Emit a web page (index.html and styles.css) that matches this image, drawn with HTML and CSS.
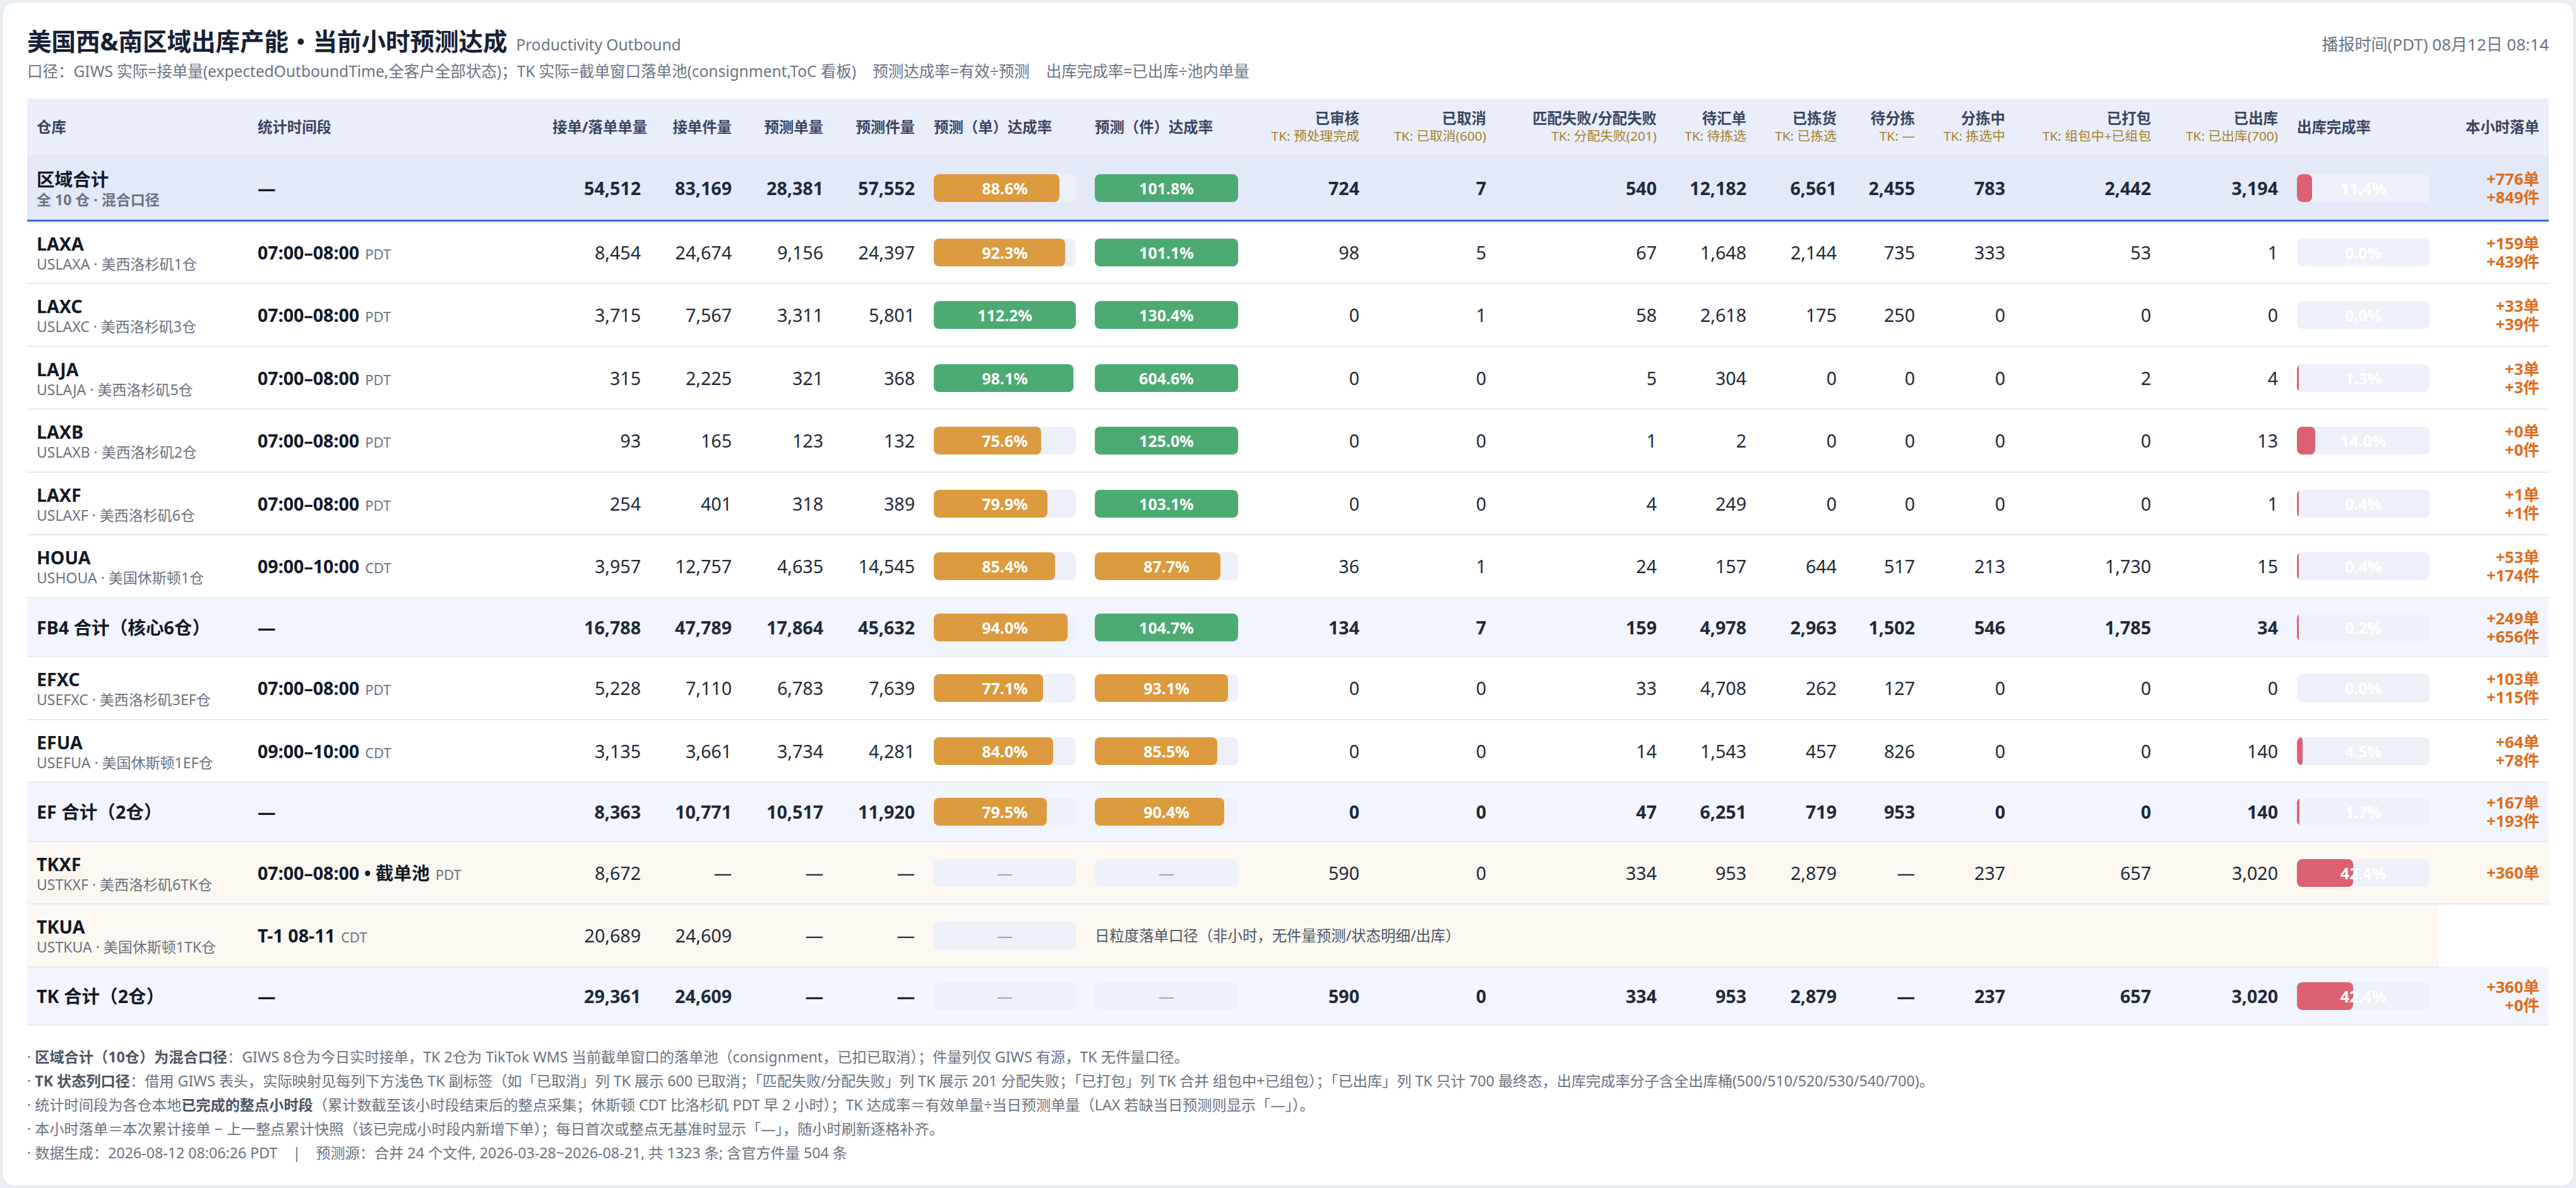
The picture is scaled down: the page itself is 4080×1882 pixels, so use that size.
FILE: index.html
```html
<!DOCTYPE html>
<html lang="zh-CN">
<head>
<meta charset="utf-8">
<title>美国西&amp;南区域出库产能</title>
<link rel="stylesheet" href="styles.css">
</head>
<body>
<div class="card">
  <div class="titlebar">
    <h1>美国西&amp;南区域出库产能・当前小时预测达成<span class="en">Productivity Outbound</span></h1>
    <div class="stamp">播报时间(PDT) 08月12日 08:14</div>
  </div>
  <div class="caliber"><span class="seg">口径：GIWS 实际=接单量(expectedOutboundTime,全客户全部状态)；TK 实际=截单窗口落单池(consignment,ToC 看板)</span><span class="seg">预测达成率=有效÷预测</span><span class="seg">出库完成率=已出库÷池内单量</span></div>

  <table class="grid">
    <colgroup>
      <col class="c1"><col class="c2"><col class="c3"><col class="c4"><col class="c5"><col class="c6"><col class="c7"><col class="c8"><col class="c9"><col class="c10"><col class="c11"><col class="c12"><col class="c13"><col class="c14"><col class="c15"><col class="c16"><col class="c17"><col class="c18"><col class="c19">
    </colgroup>
    <thead>
      <tr>
        <th class="l">仓库</th>
        <th class="l">统计时间段</th>
        <th class="r">接单/落单单量</th>
        <th class="r">接单件量</th>
        <th class="r">预测单量</th>
        <th class="r">预测件量</th>
        <th class="l">预测（单）达成率</th>
        <th class="l">预测（件）达成率</th>
        <th class="r">已审核<span class="sub">TK: 预处理完成</span></th>
        <th class="r">已取消<span class="sub">TK: 已取消(600)</span></th>
        <th class="r">匹配失败/分配失败<span class="sub">TK: 分配失败(201)</span></th>
        <th class="r">待汇单<span class="sub">TK: 待拣选</span></th>
        <th class="r">已拣货<span class="sub">TK: 已拣选</span></th>
        <th class="r">待分拣<span class="sub">TK: —</span></th>
        <th class="r">分拣中<span class="sub">TK: 拣选中</span></th>
        <th class="r">已打包<span class="sub">TK: 组包中+已组包</span></th>
        <th class="r">已出库<span class="sub">TK: 已出库(700)</span></th>
        <th class="l">出库完成率</th>
        <th class="r">本小时落单</th>
      </tr>
    </thead>
    <tbody>
      <tr class="region">
        <td><span class="name">区域合计</span><span class="code">全 10 仓 · 混合口径</span></td>
        <td class="time">—</td>
        <td class="r">54,512</td><td class="r">83,169</td><td class="r">28,381</td><td class="r">57,552</td>
        <td><div class="bar"><div class="fill orange" style="width:88.6%"></div><span class="lbl">88.6%</span></div></td>
        <td><div class="bar"><div class="fill green" style="width:100%"></div><span class="lbl">101.8%</span></div></td>
        <td class="r">724</td><td class="r">7</td><td class="r">540</td><td class="r">12,182</td><td class="r">6,561</td><td class="r">2,455</td><td class="r">783</td><td class="r">2,442</td><td class="r">3,194</td>
        <td><div class="bar"><div class="fill red nz" style="width:11.4%"></div><span class="lbl">11.4%</span></div></td>
        <td class="delta"><span>+776单</span><span>+849件</span></td>
      </tr>
      <tr>
        <td><span class="name">LAXA</span><span class="code">USLAXA · 美西洛杉矶1仓</span></td>
        <td class="time"><b>07:00–08:00</b><span class="tz">PDT</span></td>
        <td class="r">8,454</td><td class="r">24,674</td><td class="r">9,156</td><td class="r">24,397</td>
        <td><div class="bar"><div class="fill orange" style="width:92.3%"></div><span class="lbl">92.3%</span></div></td>
        <td><div class="bar"><div class="fill green" style="width:100%"></div><span class="lbl">101.1%</span></div></td>
        <td class="r">98</td><td class="r">5</td><td class="r">67</td><td class="r">1,648</td><td class="r">2,144</td><td class="r">735</td><td class="r">333</td><td class="r">53</td><td class="r">1</td>
        <td><div class="bar"><span class="lbl">0.0%</span></div></td>
        <td class="delta"><span>+159单</span><span>+439件</span></td>
      </tr>
      <tr>
        <td><span class="name">LAXC</span><span class="code">USLAXC · 美西洛杉矶3仓</span></td>
        <td class="time"><b>07:00–08:00</b><span class="tz">PDT</span></td>
        <td class="r">3,715</td><td class="r">7,567</td><td class="r">3,311</td><td class="r">5,801</td>
        <td><div class="bar"><div class="fill green" style="width:100%"></div><span class="lbl">112.2%</span></div></td>
        <td><div class="bar"><div class="fill green" style="width:100%"></div><span class="lbl">130.4%</span></div></td>
        <td class="r">0</td><td class="r">1</td><td class="r">58</td><td class="r">2,618</td><td class="r">175</td><td class="r">250</td><td class="r">0</td><td class="r">0</td><td class="r">0</td>
        <td><div class="bar"><span class="lbl">0.0%</span></div></td>
        <td class="delta"><span>+33单</span><span>+39件</span></td>
      </tr>
      <tr>
        <td><span class="name">LAJA</span><span class="code">USLAJA · 美西洛杉矶5仓</span></td>
        <td class="time"><b>07:00–08:00</b><span class="tz">PDT</span></td>
        <td class="r">315</td><td class="r">2,225</td><td class="r">321</td><td class="r">368</td>
        <td><div class="bar"><div class="fill green" style="width:98.1%"></div><span class="lbl">98.1%</span></div></td>
        <td><div class="bar"><div class="fill green" style="width:100%"></div><span class="lbl">604.6%</span></div></td>
        <td class="r">0</td><td class="r">0</td><td class="r">5</td><td class="r">304</td><td class="r">0</td><td class="r">0</td><td class="r">0</td><td class="r">2</td><td class="r">4</td>
        <td><div class="bar"><div class="fill red nz" style="width:1.3%"></div><span class="lbl">1.3%</span></div></td>
        <td class="delta"><span>+3单</span><span>+3件</span></td>
      </tr>
      <tr>
        <td><span class="name">LAXB</span><span class="code">USLAXB · 美西洛杉矶2仓</span></td>
        <td class="time"><b>07:00–08:00</b><span class="tz">PDT</span></td>
        <td class="r">93</td><td class="r">165</td><td class="r">123</td><td class="r">132</td>
        <td><div class="bar"><div class="fill orange" style="width:75.6%"></div><span class="lbl">75.6%</span></div></td>
        <td><div class="bar"><div class="fill green" style="width:100%"></div><span class="lbl">125.0%</span></div></td>
        <td class="r">0</td><td class="r">0</td><td class="r">1</td><td class="r">2</td><td class="r">0</td><td class="r">0</td><td class="r">0</td><td class="r">0</td><td class="r">13</td>
        <td><div class="bar"><div class="fill red nz" style="width:14%"></div><span class="lbl">14.0%</span></div></td>
        <td class="delta"><span>+0单</span><span>+0件</span></td>
      </tr>
      <tr>
        <td><span class="name">LAXF</span><span class="code">USLAXF · 美西洛杉矶6仓</span></td>
        <td class="time"><b>07:00–08:00</b><span class="tz">PDT</span></td>
        <td class="r">254</td><td class="r">401</td><td class="r">318</td><td class="r">389</td>
        <td><div class="bar"><div class="fill orange" style="width:79.9%"></div><span class="lbl">79.9%</span></div></td>
        <td><div class="bar"><div class="fill green" style="width:100%"></div><span class="lbl">103.1%</span></div></td>
        <td class="r">0</td><td class="r">0</td><td class="r">4</td><td class="r">249</td><td class="r">0</td><td class="r">0</td><td class="r">0</td><td class="r">0</td><td class="r">1</td>
        <td><div class="bar"><div class="fill red nz" style="width:0.4%"></div><span class="lbl">0.4%</span></div></td>
        <td class="delta"><span>+1单</span><span>+1件</span></td>
      </tr>
      <tr>
        <td><span class="name">HOUA</span><span class="code">USHOUA · 美国休斯顿1仓</span></td>
        <td class="time"><b>09:00–10:00</b><span class="tz">CDT</span></td>
        <td class="r">3,957</td><td class="r">12,757</td><td class="r">4,635</td><td class="r">14,545</td>
        <td><div class="bar"><div class="fill orange" style="width:85.4%"></div><span class="lbl">85.4%</span></div></td>
        <td><div class="bar"><div class="fill orange" style="width:87.7%"></div><span class="lbl">87.7%</span></div></td>
        <td class="r">36</td><td class="r">1</td><td class="r">24</td><td class="r">157</td><td class="r">644</td><td class="r">517</td><td class="r">213</td><td class="r">1,730</td><td class="r">15</td>
        <td><div class="bar"><div class="fill red nz" style="width:0.4%"></div><span class="lbl">0.4%</span></div></td>
        <td class="delta"><span>+53单</span><span>+174件</span></td>
      </tr>
      <tr class="subtotal">
        <td><span class="name">FB4 合计（核心6仓）</span></td>
        <td class="time">—</td>
        <td class="r">16,788</td><td class="r">47,789</td><td class="r">17,864</td><td class="r">45,632</td>
        <td><div class="bar"><div class="fill orange" style="width:94%"></div><span class="lbl">94.0%</span></div></td>
        <td><div class="bar"><div class="fill green" style="width:100%"></div><span class="lbl">104.7%</span></div></td>
        <td class="r">134</td><td class="r">7</td><td class="r">159</td><td class="r">4,978</td><td class="r">2,963</td><td class="r">1,502</td><td class="r">546</td><td class="r">1,785</td><td class="r">34</td>
        <td><div class="bar"><div class="fill red nz" style="width:0.2%"></div><span class="lbl">0.2%</span></div></td>
        <td class="delta"><span>+249单</span><span>+656件</span></td>
      </tr>
      <tr>
        <td><span class="name">EFXC</span><span class="code">USEFXC · 美西洛杉矶3EF仓</span></td>
        <td class="time"><b>07:00–08:00</b><span class="tz">PDT</span></td>
        <td class="r">5,228</td><td class="r">7,110</td><td class="r">6,783</td><td class="r">7,639</td>
        <td><div class="bar"><div class="fill orange" style="width:77.1%"></div><span class="lbl">77.1%</span></div></td>
        <td><div class="bar"><div class="fill orange" style="width:93.1%"></div><span class="lbl">93.1%</span></div></td>
        <td class="r">0</td><td class="r">0</td><td class="r">33</td><td class="r">4,708</td><td class="r">262</td><td class="r">127</td><td class="r">0</td><td class="r">0</td><td class="r">0</td>
        <td><div class="bar"><span class="lbl">0.0%</span></div></td>
        <td class="delta"><span>+103单</span><span>+115件</span></td>
      </tr>
      <tr>
        <td><span class="name">EFUA</span><span class="code">USEFUA · 美国休斯顿1EF仓</span></td>
        <td class="time"><b>09:00–10:00</b><span class="tz">CDT</span></td>
        <td class="r">3,135</td><td class="r">3,661</td><td class="r">3,734</td><td class="r">4,281</td>
        <td><div class="bar"><div class="fill orange" style="width:84%"></div><span class="lbl">84.0%</span></div></td>
        <td><div class="bar"><div class="fill orange" style="width:85.5%"></div><span class="lbl">85.5%</span></div></td>
        <td class="r">0</td><td class="r">0</td><td class="r">14</td><td class="r">1,543</td><td class="r">457</td><td class="r">826</td><td class="r">0</td><td class="r">0</td><td class="r">140</td>
        <td><div class="bar"><div class="fill red nz" style="width:4.5%"></div><span class="lbl">4.5%</span></div></td>
        <td class="delta"><span>+64单</span><span>+78件</span></td>
      </tr>
      <tr class="subtotal">
        <td><span class="name">EF 合计（2仓）</span></td>
        <td class="time">—</td>
        <td class="r">8,363</td><td class="r">10,771</td><td class="r">10,517</td><td class="r">11,920</td>
        <td><div class="bar"><div class="fill orange" style="width:79.5%"></div><span class="lbl">79.5%</span></div></td>
        <td><div class="bar"><div class="fill orange" style="width:90.4%"></div><span class="lbl">90.4%</span></div></td>
        <td class="r">0</td><td class="r">0</td><td class="r">47</td><td class="r">6,251</td><td class="r">719</td><td class="r">953</td><td class="r">0</td><td class="r">0</td><td class="r">140</td>
        <td><div class="bar"><div class="fill red nz" style="width:1.7%"></div><span class="lbl">1.7%</span></div></td>
        <td class="delta"><span>+167单</span><span>+193件</span></td>
      </tr>
      <tr class="tk">
        <td><span class="name">TKXF</span><span class="code">USTKXF · 美西洛杉矶6TK仓</span></td>
        <td class="time"><b>07:00–08:00 • 截单池</b><span class="tz">PDT</span></td>
        <td class="r">8,672</td><td class="r">—</td><td class="r">—</td><td class="r">—</td>
        <td><div class="bar"><span class="lbl dash">—</span></div></td>
        <td><div class="bar"><span class="lbl dash">—</span></div></td>
        <td class="r">590</td><td class="r">0</td><td class="r">334</td><td class="r">953</td><td class="r">2,879</td><td class="r">—</td><td class="r">237</td><td class="r">657</td><td class="r">3,020</td>
        <td><div class="bar"><div class="fill red nz" style="width:42.4%"></div><span class="lbl">42.4%</span></div></td>
        <td class="delta"><span>+360单</span></td>
      </tr>
      <tr class="tk">
        <td><span class="name">TKUA</span><span class="code">USTKUA · 美国休斯顿1TK仓</span></td>
        <td class="time"><b>T-1 08-11</b><span class="tz">CDT</span></td>
        <td class="r">20,689</td><td class="r">24,609</td><td class="r">—</td><td class="r">—</td>
        <td><div class="bar"><span class="lbl dash">—</span></div></td>
        <td class="note" colspan="11">日粒度落单口径（非小时，无件量预测/状态明细/出库）</td>
      </tr>
      <tr class="subtotal">
        <td><span class="name">TK 合计（2仓）</span></td>
        <td class="time">—</td>
        <td class="r">29,361</td><td class="r">24,609</td><td class="r">—</td><td class="r">—</td>
        <td><div class="bar"><span class="lbl dash">—</span></div></td>
        <td><div class="bar"><span class="lbl dash">—</span></div></td>
        <td class="r">590</td><td class="r">0</td><td class="r">334</td><td class="r">953</td><td class="r">2,879</td><td class="r">—</td><td class="r">237</td><td class="r">657</td><td class="r">3,020</td>
        <td><div class="bar"><div class="fill red nz" style="width:42.4%"></div><span class="lbl">42.4%</span></div></td>
        <td class="delta"><span>+360单</span><span>+0件</span></td>
      </tr>
    </tbody>
  </table>

  <div class="notes">
    <p>· <b>区域合计（10仓）为混合口径</b>：GIWS 8仓为今日实时接单，TK 2仓为 TikTok WMS 当前截单窗口的落单池（consignment，已扣已取消）；件量列仅 GIWS 有源，TK 无件量口径。</p>
    <p>· <b>TK 状态列口径</b>：借用 GIWS 表头，实际映射见每列下方浅色 TK 副标签（如「已取消」列 TK 展示 600 已取消；「匹配失败/分配失败」列 TK 展示 201 分配失败；「已打包」列 TK 合并 组包中+已组包）；「已出库」列 TK 只计 700 最终态，出库完成率分子含全出库桶(500/510/520/530/540/700)。</p>
    <p>· 统计时间段为各仓本地<b>已完成的整点小时段</b>（累计数截至该小时段结束后的整点采集；休斯顿 CDT 比洛杉矶 PDT 早 2 小时）；TK 达成率＝有效单量÷当日预测单量（LAX 若缺当日预测则显示「—」）。</p>
    <p>· 本小时落单＝本次累计接单 − 上一整点累计快照（该已完成小时段内新增下单）；每日首次或整点无基准时显示「—」，随小时刷新逐格补齐。</p>
    <p>· 数据生成：2026-08-12 08:06:26 PDT<span class="sep">|</span>预测源：合并 24 个文件, 2026-03-28~2026-08-21, 共 1323 条; 含官方件量 504 条</p>
  </div>
</div>
</body>
</html>
```

FILE: styles.css
```css
* { box-sizing: border-box; }

html, body { margin: 0; }

body {
  background: #e9edf4;
  padding: 3px;
  font-family: "Noto Sans", "Noto Sans CJK SC", sans-serif;
  color: #1f2937;
}

.card {
  background: #ffffff;
  border: 1px solid #e1e5ed;
  border-radius: 20px;
  height: 1876px;
  padding: 36px 39px 0;
  overflow: hidden;
}

.titlebar {
  display: flex;
  justify-content: space-between;
  align-items: baseline;
  height: 50px;
}

h1 {
  margin: 0;
  font-size: 38.5px;
  line-height: 50px;
  font-weight: 700;
  color: #182033;
}

.en {
  font-size: 24.5px;
  line-height: 1;
  font-weight: 400;
  color: #6b7385;
  margin-left: 14px;
}

.stamp {
  font-size: 26px;
  line-height: 1;
  color: #6b7385;
}

.caliber {
  margin-top: 7px;
  font-size: 24.5px;
  line-height: 32px;
  color: #6b7385;
  white-space: nowrap;
}

.caliber .seg + .seg { margin-left: 26px; }

.grid {
  margin-top: 27px;
  width: 3994px;
  border-collapse: collapse;
  table-layout: fixed;
}

.c1 { width: 350px; }
.c2 { width: 467px; }
.c3 { width: 170px; }
.c4 { width: 144px; }
.c5 { width: 145px; }
.c6 { width: 145px; }
.c7 { width: 255px; }
.c8 { width: 257px; }
.c9 { width: 192px; }
.c10 { width: 201px; }
.c11 { width: 270px; }
.c12 { width: 142px; }
.c13 { width: 143px; }
.c14 { width: 124px; }
.c15 { width: 143px; }
.c16 { width: 231px; }
.c17 { width: 201px; }
.c18 { width: 240px; }
.c19 { width: 174px; }

th {
  background: #eaeefa;
  padding: 16px 15px 16.5px;
  border-bottom: 2px solid #e0e5f2;
  vertical-align: middle;
  font-size: 23.4px;
  line-height: 30px;
  font-weight: 700;
  color: #39445f;
  white-space: nowrap;
}

th .sub {
  display: block;
  font-size: 20.8px;
  line-height: 27px;
  font-weight: 400;
  color: #a57f2c;
}

td {
  padding: 17px 15px 16.5px;
  border-bottom: 2px solid #e6e9f0;
  vertical-align: middle;
  font-size: 28.6px;
  line-height: 36px;
  white-space: nowrap;
  color: #1f2937;
}

.l { text-align: left; }
.r { text-align: right; }

.name {
  display: block;
  font-weight: 700;
  color: #111827;
  font-size: 28.6px;
  line-height: 36px;
}

.code {
  display: block;
  font-size: 23px;
  line-height: 28px;
  color: #6b7280;
}

.time { font-weight: 700; color: #111827; }
.time b { font-weight: 700; }

.tz {
  font-size: 22px;
  line-height: 1;
  font-weight: 400;
  color: #6b7280;
  margin-left: 9px;
}

.delta {
  text-align: right;
  color: #de6c1c;
  font-weight: 700;
  font-size: 25.5px;
  line-height: 29px;
}

.delta span { display: block; }

.region td {
  background: #e3e9f9;
  border-bottom: 3px solid #2e6ae0;
  padding-top: 18.5px;
  padding-bottom: 17.5px;
  font-weight: 700;
}

.subtotal td {
  background: #f2f5fd;
  font-weight: 700;
}

.tk td { background: #fcf8f1; }

.bar {
  position: relative;
  height: 44px;
  border-radius: 8px;
  background: #edf0f8;
  overflow: hidden;
}

.fill {
  height: 100%;
  border-radius: 8px;
}

.fill.nz { min-width: 3px; }

.orange { background: #dc9a3e; }
.green { background: #4bab73; }
.red { background: #dc6172; }

.lbl {
  position: absolute;
  inset: 0;
  display: flex;
  align-items: center;
  justify-content: center;
  color: #ffffff;
  font-weight: 700;
  font-size: 25px;
}

.lbl.dash {
  color: #9aa3b5;
  font-weight: 400;
}

.note {
  font-size: 23.4px;
  color: #4b5563;
  font-weight: 400;
}

.notes {
  margin-top: 30px;
  font-size: 23.2px;
  line-height: 38px;
  color: #6b7280;
}

.notes p {
  margin: 0;
  white-space: nowrap;
}

.notes b {
  font-weight: 700;
  color: #4b5563;
}

.sep { margin: 0 24px; }
```
